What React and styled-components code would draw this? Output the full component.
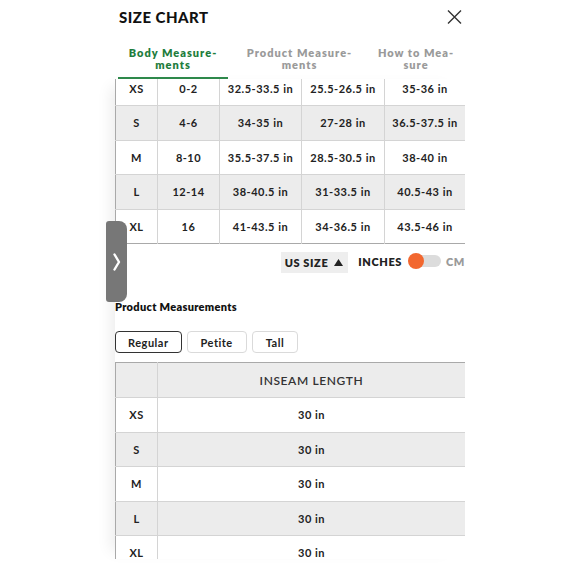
import React from "react";
import styled, { createGlobalStyle } from "styled-components";

const Global = createGlobalStyle`
  html, body { margin: 0; padding: 0; background: #fff; }
  body { font-family: "Lato", "Open Sans", sans-serif; color: #222; }
`;

const Page = styled.div`
  width: 580px;
  height: 580px;
  display: flex;
  justify-content: center;
  background: #fff;
`;

const Panel = styled.div`
  position: relative;
  width: 350px;
  height: 559px;
  display: flex;
  flex-direction: column;
`;

const Header = styled.div`
  display: flex;
  align-items: center;
  justify-content: space-between;
  height: 34px;
  padding: 0 3px 0 4px;
`;

const Title = styled.h1`
  margin: 0;
  font-size: 15px;
  font-weight: 900;
  letter-spacing: 0.5px;
  color: #111;
`;

const Close = styled.button`
  border: 0;
  background: none;
  padding: 0;
  width: 16px;
  height: 16px;
  display: flex;
`;

const Tabs = styled.div`
  display: flex;
  margin-top: 13px;
  padding: 0 0 0 3px;
`;

const Tab = styled.div`
  width: ${(p) => p.$w}px;
  text-align: center;
  font-size: 11px;
  line-height: 12px;
  font-weight: 800;
  letter-spacing: 1px;
  color: ${(p) => (p.$active ? "#1f7d3d" : "#9a9a9a")};
  padding-bottom: 6px;
  border-bottom: 2px solid ${(p) => (p.$active ? "#2f8a4c" : "transparent")};
`;

const Scroll = styled.div`
  flex: 1;
  overflow: hidden;
  box-shadow: -12px 0 14px -8px rgba(0, 0, 0, 0.08);
`;

const Inner = styled.div`
  margin-top: -8px;
  display: flex;
  flex-direction: column;
`;

const Table = styled.table`
  width: 350px;
  border-collapse: collapse;
  table-layout: fixed;
  border-left: 1.5px solid #a9a9a9;
  border-right: 1.5px solid #a9a9a9;
`;

const Row = styled.tr`
  height: ${(p) => p.$h || 34.5}px;
  background: ${(p) => (p.$alt ? "#ececec" : "#fff")};
  border-bottom: 1.5px solid ${(p) => (p.$last ? "#a9a9a9" : "#d4d4d4")};
  border-top: ${(p) => (p.$top ? "1.5px solid #a9a9a9" : "0")};
`;

const Cell = styled.td`
  padding: 0;
  text-align: center;
  vertical-align: middle;
  font-size: 11px;
  font-weight: 700;
  letter-spacing: 0.5px;
  color: #222;
  border-right: 1.5px solid #d4d4d4;
  white-space: nowrap;
`;

const HeadCell = styled(Cell)`
  font-size: 12px;
  font-weight: 600;
  letter-spacing: 0.6px;
  color: #333;
`;

const Controls = styled.div`
  display: flex;
  justify-content: flex-end;
  align-items: center;
  gap: 10px;
  margin-top: 8px;
  height: 21px;
`;

const UnitBox = styled.div`
  background: #eeeeee;
  height: 21px;
  padding: 0 5px 0 4px;
  display: flex;
  align-items: center;
  gap: 6px;
  font-size: 11px;
  font-weight: 800;
  letter-spacing: 0.6px;
  color: #222;
`;

const ToggleGroup = styled.div`
  display: flex;
  align-items: center;
  gap: 4px;
  margin-top: -3px;
`;

const ToggleLabel = styled.span`
  font-size: 11px;
  font-weight: 800;
  letter-spacing: 0.6px;
  color: ${(p) => (p.$muted ? "#9a9a9a" : "#222")};
`;

const Track = styled.div`
  position: relative;
  width: 32px;
  height: 12px;
  border-radius: 6px;
  background: #dcdcdc;
  margin: 0 1px 0 3px;
`;

const Knob = styled.div`
  position: absolute;
  left: -1px;
  top: -2px;
  width: 16px;
  height: 16px;
  border-radius: 50%;
  background: #f2672f;
`;

const SectionTitle = styled.h2`
  margin: 27px 0 0 0;
  font-size: 11px;
  font-weight: 800;
  letter-spacing: 0.3px;
  color: #111;
`;

const Buttons = styled.div`
  display: flex;
  gap: 5px;
  margin-top: 18px;
`;

const Btn = styled.button`
  height: 22px;
  padding: 0 ${(p) => p.$px}px;
  border-radius: 4px;
  background: #fff;
  border: 1px solid ${(p) => (p.$active ? "#333" : "#dadada")};
  font-family: inherit;
  font-size: 11px;
  font-weight: 700;
  letter-spacing: 0.5px;
  color: #222;
`;

const Spacer = styled.div`
  height: 9px;
`;

const SideTab = styled.div`
  position: absolute;
  left: -9px;
  top: 221px;
  width: 21px;
  height: 81px;
  background: #777;
  border-radius: 3px 8px 8px 3px;
  display: flex;
  align-items: center;
  justify-content: center;
`;

const bodyRows = [
  ["XS", "0-2", "32.5-33.5 in", "25.5-26.5 in", "35-36 in"],
  ["S", "4-6", "34-35 in", "27-28 in", "36.5-37.5 in"],
  ["M", "8-10", "35.5-37.5 in", "28.5-30.5 in", "38-40 in"],
  ["L", "12-14", "38-40.5 in", "31-33.5 in", "40.5-43 in"],
  ["XL", "16", "41-43.5 in", "34-36.5 in", "43.5-46 in"],
];

const sizes = ["XS", "S", "M", "L", "XL"];

export default function App() {
  return (
    <Page>
      <Global />
      <Panel>
        <Header>
          <Title>SIZE CHART</Title>
          <Close aria-label="Close">
            <svg width="16" height="16" viewBox="0 0 16 16">
              <path d="M2 1.5 L15 14.5 M15 1.5 L2 14.5" stroke="#333" strokeWidth="1.4" fill="none" />
            </svg>
          </Close>
        </Header>
        <Tabs>
          <Tab $active $w={110}>Body Measure-<br />ments</Tab>
          <Tab $w={143}>Product Measure-<br />ments</Tab>
          <Tab $w={90}>How to Mea-<br />sure</Tab>
        </Tabs>
        <Scroll>
          <Inner>
            <Table>
              <colgroup>
                <col style={{ width: 42 }} />
                <col style={{ width: 62 }} />
                <col style={{ width: 82 }} />
                <col style={{ width: 83 }} />
                <col style={{ width: 81 }} />
              </colgroup>
              <tbody>
                {bodyRows.map((r, i) => (
                  <Row key={r[0]} $alt={i % 2 === 1} $last={i === bodyRows.length - 1}>
                    {r.map((c, j) => (
                      <Cell key={j}>{c}</Cell>
                    ))}
                  </Row>
                ))}
              </tbody>
            </Table>
            <Controls>
              <UnitBox>
                US SIZE
                <svg width="9" height="7" viewBox="0 0 9 7">
                  <path d="M4.5 0 L9 7 L0 7 Z" fill="#222" />
                </svg>
              </UnitBox>
              <ToggleGroup>
                <ToggleLabel>INCHES</ToggleLabel>
                <Track>
                  <Knob />
                </Track>
                <ToggleLabel $muted>CM</ToggleLabel>
              </ToggleGroup>
            </Controls>
            <SectionTitle>Product Measurements</SectionTitle>
            <Buttons>
              <Btn $active $px={12}>Regular</Btn>
              <Btn $px={13}>Petite</Btn>
              <Btn $px={13}>Tall</Btn>
            </Buttons>
            <Spacer />
            <Table>
              <colgroup>
                <col style={{ width: 42 }} />
                <col style={{ width: 308 }} />
              </colgroup>
              <tbody>
                <Row $alt $top $h={35}>
                  <HeadCell />
                  <HeadCell>INSEAM LENGTH</HeadCell>
                </Row>
                {sizes.map((s, i) => (
                  <Row key={s} $alt={i % 2 === 1}>
                    <Cell>{s}</Cell>
                    <Cell>30 in</Cell>
                  </Row>
                ))}
              </tbody>
            </Table>
          </Inner>
        </Scroll>
        <SideTab>
          <svg width="8" height="18" viewBox="0 0 8 18">
            <path d="M1.5 1.5 L6 9 L1.5 16.5" stroke="#fff" strokeWidth="2.4" fill="none" strokeLinecap="round" strokeLinejoin="round" />
          </svg>
        </SideTab>
      </Panel>
    </Page>
  );
}
